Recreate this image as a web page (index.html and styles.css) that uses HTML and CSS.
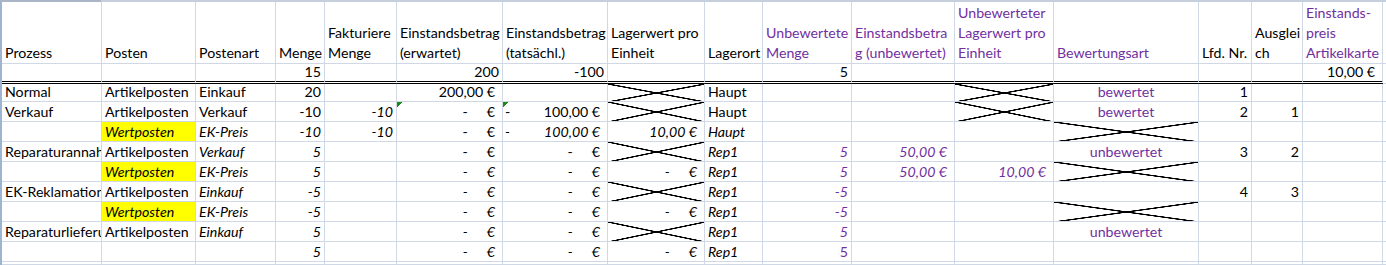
FILE: index.html
```html
<!DOCTYPE html>
<html lang="de">
<head>
<meta charset="utf-8">
<title>Bewertung</title>
<link rel="stylesheet" href="styles.css">
</head>
<body>
<div class="topbar"><div class="topsel"></div></div>
<div class="sheet">
  <div class="row hdr">
    <div class="c">Prozess</div>
    <div class="c">Posten</div>
    <div class="c">Postenart</div>
    <div class="c">Menge</div>
    <div class="c">Fakturiere<br>Menge</div>
    <div class="c">Einstandsbetrag<br>(erwartet)</div>
    <div class="c">Einstandsbetrag<br>(tatsächl.)</div>
    <div class="c">Lagerwert pro<br>Einheit</div>
    <div class="c">Lagerort</div>
    <div class="c p">Unbewertete<br>Menge</div>
    <div class="c p">Einstandsbetra<br>g (unbewertet)</div>
    <div class="c p">Unbewerteter<br>Lagerwert pro<br>Einheit</div>
    <div class="c p">Bewertungsart</div>
    <div class="c">Lfd. Nr.</div>
    <div class="c">Ausglei<br>ch</div>
    <div class="c p">Einstands-<br>preis<br>Artikelkarte</div>
    <div class="c last"></div>
  </div>
  <div class="row sum">
    <div class="c"></div><div class="c"></div><div class="c"></div>
    <div class="c r">15</div>
    <div class="c"></div>
    <div class="c r">200</div>
    <div class="c r">-100</div>
    <div class="c"></div><div class="c"></div>
    <div class="c r">5</div>
    <div class="c"></div><div class="c"></div><div class="c"></div><div class="c"></div><div class="c"></div>
    <div class="c acc">10,00 €</div>
    <div class="c last"></div>
  </div>
  <!-- Normal -->
  <div class="row">
    <div class="c">Normal</div>
    <div class="c">Artikelposten</div>
    <div class="c">Einkauf</div>
    <div class="c r">20</div>
    <div class="c"></div>
    <div class="c acc">200,00 €</div>
    <div class="c"></div>
    <div class="c x"></div>
    <div class="c">Haupt</div>
    <div class="c"></div>
    <div class="c"></div>
    <div class="c x"></div>
    <div class="c p ctr">bewertet</div>
    <div class="c r">1</div>
    <div class="c"></div>
    <div class="c"></div>
    <div class="c last"></div>
  </div>
  <!-- Verkauf -->
  <div class="row">
    <div class="c">Verkauf</div>
    <div class="c">Artikelposten</div>
    <div class="c">Verkauf</div>
    <div class="c r">-10</div>
    <div class="c r i">-10</div>
    <div class="c acc tri"><span class="dz">-</span>€</div>
    <div class="c acc neg tri"><span>-</span><span>100,00 €</span></div>
    <div class="c x"></div>
    <div class="c">Haupt</div>
    <div class="c"></div>
    <div class="c"></div>
    <div class="c x"></div>
    <div class="c p ctr">bewertet</div>
    <div class="c r">2</div>
    <div class="c r">1</div>
    <div class="c"></div>
    <div class="c last"></div>
  </div>
  <!-- Wertposten -->
  <div class="row">
    <div class="c"></div>
    <div class="c i y">Wertposten</div>
    <div class="c i">EK-Preis</div>
    <div class="c r i">-10</div>
    <div class="c r i">-10</div>
    <div class="c acc"><span class="dz">-</span>€</div>
    <div class="c acc neg i"><span>-</span><span>100,00 €</span></div>
    <div class="c acc i">10,00 €</div>
    <div class="c i">Haupt</div>
    <div class="c"></div>
    <div class="c"></div>
    <div class="c"></div>
    <div class="c x"></div>
    <div class="c"></div>
    <div class="c"></div>
    <div class="c"></div>
    <div class="c last"></div>
  </div>
  <!-- Reparaturannahme -->
  <div class="row">
    <div class="c">Reparaturannahme</div>
    <div class="c">Artikelposten</div>
    <div class="c i">Verkauf</div>
    <div class="c r i">5</div>
    <div class="c"></div>
    <div class="c acc"><span class="dz">-</span>€</div>
    <div class="c acc"><span class="dz">-</span>€</div>
    <div class="c x"></div>
    <div class="c i">Rep1</div>
    <div class="c r i p">5</div>
    <div class="c acc i p">50,00 €</div>
    <div class="c"></div>
    <div class="c p ctr">unbewertet</div>
    <div class="c r">3</div>
    <div class="c r">2</div>
    <div class="c"></div>
    <div class="c last"></div>
  </div>
  <!-- Wertposten -->
  <div class="row">
    <div class="c"></div>
    <div class="c i y">Wertposten</div>
    <div class="c i">EK-Preis</div>
    <div class="c r i">5</div>
    <div class="c"></div>
    <div class="c acc i"><span class="dz">-</span>€</div>
    <div class="c acc i"><span class="dz">-</span>€</div>
    <div class="c acc i"><span class="dz">-</span>€</div>
    <div class="c i">Rep1</div>
    <div class="c r i p">5</div>
    <div class="c acc i p">50,00 €</div>
    <div class="c acc i p">10,00 €</div>
    <div class="c x"></div>
    <div class="c"></div>
    <div class="c"></div>
    <div class="c"></div>
    <div class="c last"></div>
  </div>
  <!-- EK-Reklamation -->
  <div class="row">
    <div class="c">EK-Reklamation</div>
    <div class="c">Artikelposten</div>
    <div class="c i">Einkauf</div>
    <div class="c r i">-5</div>
    <div class="c"></div>
    <div class="c acc i"><span class="dz">-</span>€</div>
    <div class="c acc i"><span class="dz">-</span>€</div>
    <div class="c x"></div>
    <div class="c i">Rep1</div>
    <div class="c r i p">-5</div>
    <div class="c"></div>
    <div class="c"></div>
    <div class="c"></div>
    <div class="c r">4</div>
    <div class="c r">3</div>
    <div class="c"></div>
    <div class="c last"></div>
  </div>
  <!-- Wertposten -->
  <div class="row">
    <div class="c"></div>
    <div class="c i y">Wertposten</div>
    <div class="c i">EK-Preis</div>
    <div class="c r i">-5</div>
    <div class="c"></div>
    <div class="c acc i"><span class="dz">-</span>€</div>
    <div class="c acc i"><span class="dz">-</span>€</div>
    <div class="c acc i"><span class="dz">-</span>€</div>
    <div class="c i">Rep1</div>
    <div class="c r i p">-5</div>
    <div class="c"></div>
    <div class="c"></div>
    <div class="c x"></div>
    <div class="c"></div>
    <div class="c"></div>
    <div class="c"></div>
    <div class="c last"></div>
  </div>
  <!-- Reparaturlieferung -->
  <div class="row">
    <div class="c">Reparaturlieferung</div>
    <div class="c">Artikelposten</div>
    <div class="c i">Einkauf</div>
    <div class="c r i">5</div>
    <div class="c"></div>
    <div class="c acc i"><span class="dz">-</span>€</div>
    <div class="c acc i"><span class="dz">-</span>€</div>
    <div class="c x"></div>
    <div class="c i">Rep1</div>
    <div class="c r i p">5</div>
    <div class="c"></div>
    <div class="c"></div>
    <div class="c p ctr">unbewertet</div>
    <div class="c"></div>
    <div class="c"></div>
    <div class="c"></div>
    <div class="c last"></div>
  </div>
  <!-- leer -->
  <div class="row">
    <div class="c"></div>
    <div class="c"></div>
    <div class="c"></div>
    <div class="c r i">5</div>
    <div class="c"></div>
    <div class="c acc i"><span class="dz">-</span>€</div>
    <div class="c acc i"><span class="dz">-</span>€</div>
    <div class="c acc i"><span class="dz">-</span>€</div>
    <div class="c i">Rep1</div>
    <div class="c r p">5</div>
    <div class="c"></div><div class="c"></div><div class="c"></div>
    <div class="c"></div><div class="c"></div><div class="c"></div>
    <div class="c last"></div>
  </div>
  <div class="row">
    <div class="c"></div><div class="c"></div><div class="c"></div><div class="c"></div>
    <div class="c"></div><div class="c"></div><div class="c"></div><div class="c"></div>
    <div class="c"></div><div class="c"></div><div class="c"></div><div class="c"></div>
    <div class="c"></div><div class="c"></div><div class="c"></div><div class="c"></div>
    <div class="c last"></div>
  </div>
</div>
</body>
</html>
```
FILE: styles.css
```css
html, body {
  margin: 0;
  padding: 0;
  background: #ffffff;
  overflow: hidden;
}

body {
  width: 1386px;
  height: 265px;
  font-family: Lato, "Liberation Sans", sans-serif;
  font-size: 14.2px;
  color: #000000;
}

.topbar {
  height: 2px;
  background: #c6cfdc;
  display: flex;
}

.topsel {
  width: 101px;
  background: #aab6c8;
}

.sheet {
  display: grid;
  grid-template-columns: 100px 94px 80px 49px 72px 106px 105px 97px 58px 89px 103px 99px 145px 53px 51px 80px 4px;
  grid-template-rows: 62px 20px 18px repeat(8, 20px) 3px;
  border-left: 2px solid #9db5d1;
}

.row {
  display: contents;
}

.c {
  box-sizing: border-box;
  border-right: 1px solid #d0d7e5;
  border-bottom: 1px solid #d0d7e5;
  padding: 0 3px;
  overflow: hidden;
  white-space: nowrap;
  display: flex;
  align-items: flex-end;
  line-height: 19px;
}

.hdr .c {
  line-height: 20px;
}

.sum .c {
  border-bottom: 3px double #000000;
  line-height: 18px;
}

.sum .c.last {
  border-bottom: 1px solid #d0d7e5;
}

.r {
  justify-content: flex-end;
}

.ctr {
  justify-content: center;
}

.i {
  font-style: italic;
}

.p {
  color: #7030a0;
}

.y {
  background: #ffff00;
}

.acc {
  justify-content: flex-end;
  padding-right: 7px;
}

.neg {
  justify-content: space-between;
  padding-left: 2px;
}

.dz {
  margin-right: 19px;
}

.tri {
  background: linear-gradient(135deg, #1a8a1a 0, #1a8a1a 3.6px, transparent 3.6px) no-repeat;
  background-size: 7px 7px;
}

.x {
  background-origin: border-box;
  background-image:
    linear-gradient(to top right, transparent calc(50% - 0.9px), #000000 calc(50% - 0.5px), #000000 calc(50% + 0.5px), transparent calc(50% + 0.9px)),
    linear-gradient(to bottom right, transparent calc(50% - 0.9px), #000000 calc(50% - 0.5px), #000000 calc(50% + 0.5px), transparent calc(50% + 0.9px));
  background-repeat: no-repeat;
}
```
